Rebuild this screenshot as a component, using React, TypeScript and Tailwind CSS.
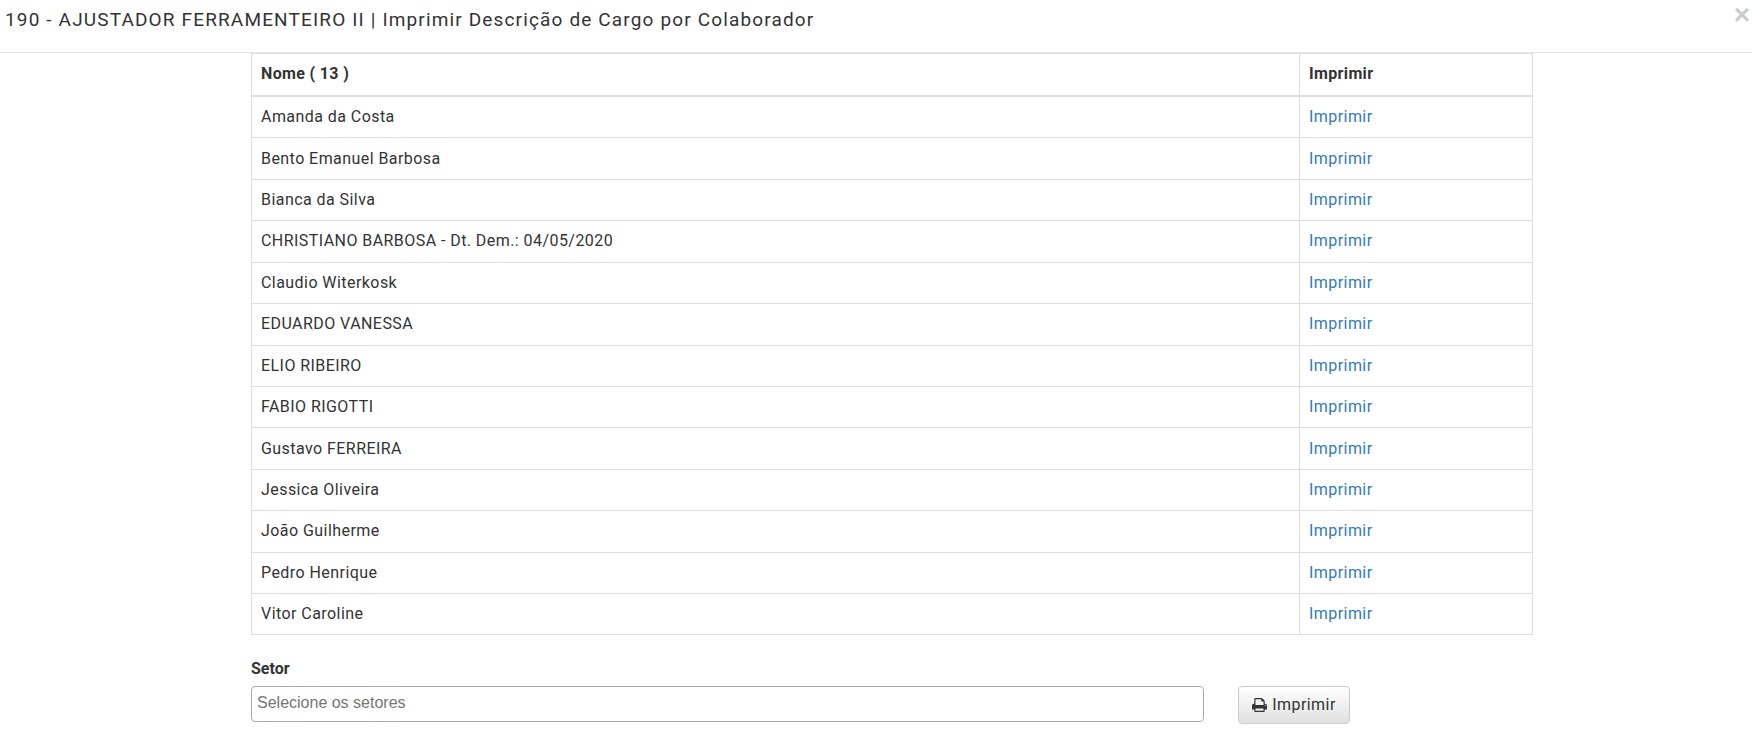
const people = [
  "Amanda da Costa",
  "Bento Emanuel Barbosa",
  "Bianca da Silva",
  "CHRISTIANO BARBOSA - Dt. Dem.: 04/05/2020",
  "Claudio Witerkosk",
  "EDUARDO VANESSA",
  "ELIO RIBEIRO",
  "FABIO RIGOTTI",
  "Gustavo FERREIRA",
  "Jessica Oliveira",
  "João Guilherme",
  "Pedro Henrique",
  "Vitor Caroline",
]

function PrintIcon() {
  return (
    <svg viewBox="64 128 1664 1536" className="h-[14px] w-[15px] fill-[#333]" aria-hidden="true">
      <path d="M448 1536h896v-256h-896v256zm0-640h896v-384h-160q-40 0-68-28t-28-68v-160h-640v640zm1152 64q0-26-19-45t-45-19-45 19-19 45 19 45 45 19 45-19 19-45zm128 0v416q0 13-9.5 22.5t-22.5 9.5h-224v160q0 40-28 68t-68 28h-960q-40 0-68-28t-28-68v-160h-224q-13 0-22.5-9.5t-9.5-22.5v-416q0-79 56.5-135.5t135.5-56.5h64v-544q0-40 28-68t68-28h672q40 0 88 20t76 48l152 152q28 28 48 76t20 88v256h64q79 0 135.5 56.5t56.5 135.5z" />
    </svg>
  )
}

export default function App() {
  return (
    <div className="min-h-[739px] bg-white font-['Roboto',sans-serif] text-[16px] text-[#333]">
      <div className="relative h-[53px] border-b border-[#e5e5e5] pl-[5px] pt-[7px]">
        <h4 className="text-[19px] leading-[26px] tracking-[1.15px] text-[#333]">
          190 - AJUSTADOR FERRAMENTEIRO II | Imprimir Descrição de Cargo por Colaborador
        </h4>
        <span className="absolute right-[2px] top-[1px] font-['Liberation_Sans',sans-serif] text-[28px] font-bold leading-[28px] text-[#ccc]">×</span>
      </div>

      <div className="ml-[251px] w-[1282px]">
        <table className="w-full border-collapse">
          <thead>
            <tr className="h-[42px]">
              <th className="border border-b-2 border-[#ddd] px-[9px] text-left font-bold tracking-[0.35px]">Nome ( 13 )</th>
              <th className="w-[233px] border border-b-2 border-[#ddd] px-[9px] text-left font-bold tracking-[0.35px]">Imprimir</th>
            </tr>
          </thead>
          <tbody>
            {people.map((name) => (
              <tr key={name} className="h-[41.43px] first:h-[42.43px]">
                <td className="border border-[#ddd] px-[9px] tracking-[0.44px]">{name}</td>
                <td className="border border-[#ddd] px-[9px] tracking-[0.44px] text-[#337ab7]">
                  <a href="#">Imprimir</a>
                </td>
              </tr>
            ))}
          </tbody>
        </table>

        <label className="mt-[23px] block text-[16px] font-bold leading-[22px]">Setor</label>
        <div className="mt-[6px] flex items-start">
          <div className="flex h-[36px] w-[953px] items-center rounded-[4px] border border-[#aaa] pb-[2px] pl-[5px] font-['Liberation_Sans',sans-serif] text-[16px] text-[#757575]">
            Selecione os setores
          </div>
          <button className="ml-[34px] flex h-[38px] w-[112px] items-center justify-center gap-[5px] rounded-[4px] border border-[#ccc] bg-gradient-to-b from-white to-[#e0e0e0] text-[16px] tracking-[0.44px] text-[#333]">
            <PrintIcon />
            Imprimir
          </button>
        </div>
      </div>
    </div>
  )
}
